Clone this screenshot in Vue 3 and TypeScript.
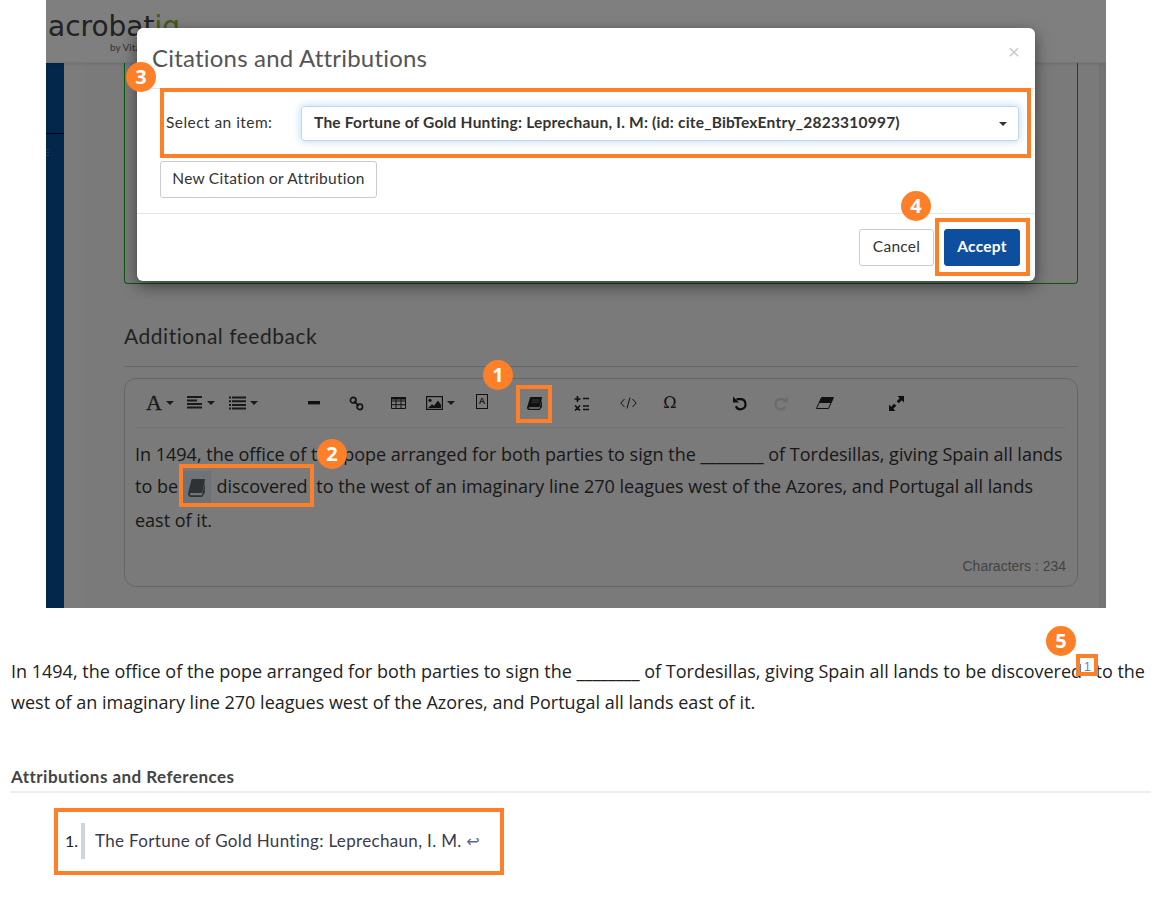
<script setup lang="ts">
const marks = [
  { n: 1, x: 498, y: 375 },
  { n: 2, x: 332, y: 454 },
  { n: 3, x: 141, y: 77 },
  { n: 4, x: 916, y: 206 },
  { n: 5, x: 1061, y: 641 },
]
const boxes = [
  { x: 160, y: 88, w: 871, h: 70 },
  { x: 935, y: 218, w: 95, h: 58 },
  { x: 516, y: 385, w: 36, h: 38 },
  { x: 179, y: 464, w: 135, h: 43 },
  { x: 1076, y: 654, w: 22, h: 22 },
  { x: 54, y: 808, w: 450, h: 67 },
]
const bookPath =
  'M3 .5Q3.200 0 3.800 0H14.600Q15 0 15 .5L12.700 9.600Q12.500 10.200 11.900 10.200H2.600Q1.400 10.200 1.600 11.100Q1.800 11.800 2.800 11.800H12.400L14.900 2.500V10L13 12.500Q12.800 13 12.200 13H2.600Q0 13 0 10.500Z'
</script>

<template>
  <div class="page">
    <section class="shot">
      <header class="app-header">
        <div class="logo">
          <span class="logo-word">acrobat<em>iq</em></span>
          <span class="logo-by">by Vital</span>
        </div>
      </header>
      <div class="app-body">
        <aside class="sidebar"><i class="side-rule"></i><i class="side-glyph"></i></aside>
        <div class="strip"></div>
        <main class="main">
          <div class="green-card"></div>
          <h2 class="feedback">Additional feedback</h2>
          <div class="editor">
            <div class="toolbar">
              <span class="tb font-a w40">A<i class="caret"></i></span>
              <span class="tb w42">
                <svg width="16" height="14" viewBox="0 0 16 14"><path d="M0 1h15M0 4.500h10M0 8h15M0 11.500h15" stroke="#333" stroke-width="1.800" /></svg><i class="caret"></i>
              </span>
              <span class="tb w42">
                <svg width="17" height="14" viewBox="0 0 17 14"><path d="M0 1.500h2M0 5.200h2M0 8.900h2M0 12.500h2M3 1.500h14M3 5.200h14M3 8.900h14M3 12.500h14" stroke="#333" stroke-width="2" /></svg><i class="caret"></i>
              </span>
              <span class="tb w42 g29">
                <svg width="12" height="4" viewBox="0 0 12 4"><rect width="12" height="3.400" fill="#222" /></svg>
              </span>
              <span class="tb w42">
                <svg width="15" height="15" viewBox="0 0 16 16"><circle cx="4.500" cy="4.500" r="3" fill="none" stroke="#222" stroke-width="1.700" /><circle cx="11.500" cy="11.500" r="3" fill="none" stroke="#222" stroke-width="1.700" /><path d="M5.500 5.500l5 5" stroke="#222" stroke-width="1.700" /></svg>
              </span>
              <span class="tb w42">
                <svg width="15" height="12" viewBox="0 0 15 12"><path d="M.5.500h14v11H.5zM.5 4h14M.5 7.700h14M5 .5v11M10 .5v11" fill="none" stroke="#222" /><path d="M0 0h15v2.500H0z" fill="#222" /></svg>
              </span>
              <span class="tb w42">
                <svg width="17" height="14" viewBox="0 0 17 14"><rect x=".6" y=".6" width="15.800" height="12.800" fill="none" stroke="#222" stroke-width="1.200" /><circle cx="4" cy="4.300" r="1.600" fill="#222" /><path d="M2 12l4-3.800 2 1.600 4-5.300 3 4.300v3.200z" fill="#222" /></svg><i class="caret"></i>
              </span>
              <span class="tb w42">
                <span class="boxed-a">A</span>
              </span>
              <span class="tb w42 g10">
                <svg width="15" height="13" viewBox="0 0 15 13"><path :d="bookPath" fill="#222" /><path d="M5 3h7.500M4.500 5.200h7.500" stroke="#888" stroke-width=".8" /></svg>
              </span>
              <span class="tb w42 g5">
                <svg width="15" height="15" viewBox="0 0 15 15"><path d="M3.500 0v6M.5 3h6M9 2.500h6M1 9.500l5 5M6 9.500l-5 5M9 10h6M9 13.500h6" stroke="#222" stroke-width="1.700" fill="none" /></svg>
              </span>
              <span class="tb w42 g5">
                <svg width="17" height="12" viewBox="0 0 17 12"><path d="M4.500 2L.8 6l3.700 4M12.500 2l3.700 4-3.700 4M10 .5L7 11.500" stroke="#222" fill="none" stroke-width="1" /></svg>
              </span>
              <span class="tb w42 omega">Ω</span>
              <span class="tb w42 g29">
                <svg class="shift-l" width="15" height="15" viewBox="0 0 15 15"><path d="M4.500 3.200H8.500a5 5 0 1 1-4.600 7" stroke="#1c1c1c" stroke-width="2.200" fill="none" /><path d="M1 0.500v6h6z" fill="#1c1c1c" /></svg>
              </span>
              <span class="tb w42">
                <svg class="shift-l" width="15" height="15" viewBox="0 0 15 15"><path d="M10.500 3.200H6.500a5 5 0 1 0 4.600 7" stroke="#d6d6d6" stroke-width="2.200" fill="none" /><path d="M14 0.500v6H8z" fill="#d6d6d6" /></svg>
              </span>
              <span class="tb w42">
                <svg width="18" height="12" viewBox="0 0 18 12"><path d="M5.500.5H17.500L12.500 11.500H.5z" fill="none" stroke="#222" /><path d="M5.500.5H17.500L15 6H3z" fill="#222" /></svg>
              </span>
              <span class="tb w42 g29">
                <svg width="15" height="15" viewBox="0 0 15 15"><path d="M8.500 0H15V6.500L12.800 4.300 9.800 7.300 7.700 5.200 10.700 2.200zM6.500 15H0V8.500L2.200 10.700 5.200 7.700 7.300 9.800 4.300 12.800z" fill="#1c1c1c" /></svg>
              </span>
            </div>
            <div class="editor-text">In 1494, the office of the pope arranged for both parties to sign the ________ of Tordesillas, giving Spain all lands to be <span class="cite-icon"><svg width="17" height="18" viewBox="0 0 15 13" preserveAspectRatio="none"><path :d="bookPath" fill="#5d6468" /></svg></span> <span class="cite-word">discovered</span> to the west of an imaginary line 270 leagues west of the Azores, and Portugal all lands east of it.</div>
            <div class="editor-foot">Characters : 234</div>
          </div>
        </main>
        <div class="gutter"></div>
      </div>
      <div class="backdrop"></div>
      <div class="modal">
        <div class="modal-head">
          <h3>Citations and Attributions</h3>
          <span class="close">×</span>
        </div>
        <div class="modal-body">
          <div class="select-row">
            <label>Select an item:</label>
            <div class="select">
              <span>The Fortune of Gold Hunting: Leprechaun, I. M: (id: cite_BibTexEntry_2823310997)</span>
              <i class="select-caret"></i>
            </div>
          </div>
          <button class="btn new-btn">New Citation or Attribution</button>
        </div>
        <div class="modal-foot">
          <button class="btn cancel">Cancel</button>
          <button class="btn accept">Accept</button>
        </div>
      </div>
    </section>

    <section class="article">
      <p class="para">In 1494, the office of the pope arranged for both parties to sign the ________ of Tordesillas, giving Spain all lands to be discovered<sup class="fn">1</sup> to the west of an imaginary line 270 leagues west of the Azores, and Portugal all lands east of it.</p>
      <h4 class="refs-title">Attributions and References</h4>
      <ol class="refs">
        <li><span class="ref-num">1.</span><span class="ref-bar"></span><span class="ref-text">The Fortune of Gold Hunting: Leprechaun, I. M. <span class="back">↩</span></span></li>
      </ol>
    </section>

    <i
      v-for="(b, i) in boxes"
      :key="'b' + i"
      class="call-box"
      :style="{ left: b.x + 'px', top: b.y + 'px', width: b.w + 'px', height: b.h + 'px' }"
    ></i>
    <span
      v-for="m in marks"
      :key="m.n"
      class="badge"
      :style="{ left: m.x - 15 + 'px', top: m.y - 15 + 'px' }"
    >{{ m.n }}</span>
  </div>
</template>

<style scoped>
.page {
  position: relative;
  width: 1152px;
  height: 902px;
  overflow: hidden;
  background: #fff;
  font-family: "Open Sans", sans-serif;
  color: #333;
}
.shot {
  position: relative;
  margin-left: 46px;
  width: 1060px;
  height: 608px;
  overflow: hidden;
  background: #fff;
}
.app-header {
  height: 63px;
  box-sizing: border-box;
  border-bottom: 1px solid #eee;
  box-shadow: 0 1px 3px rgba(0, 0, 0, .1);
  position: relative;
  z-index: 1;
  background: #fff;
}
.logo {
  position: relative;
  padding: 9px 0 0 2px;
  font-family: "DejaVu Sans", sans-serif;
}
.logo-word {
  font-size: 28px;
  line-height: 36px;
  color: #444;
}
.logo-word em {
  font-style: normal;
  color: #8ab82e;
}
.logo-by {
  position: absolute;
  left: 64px;
  top: 41px;
  font: 400 10px/12px Lato, sans-serif;
  color: #666;
}
.app-body {
  display: flex;
  height: 545px;
  background: #f4f4f4;
}
.sidebar {
  width: 18px;
  background: #064d96;
  position: relative;
}
.side-rule {
  display: block;
  height: 1px;
  margin-top: 70px;
  background: #003;
}
.side-glyph {
  display: block;
  width: 3px;
  height: 8px;
  margin-top: 15px;
  background: repeating-linear-gradient(#3a74b0 0 1px, transparent 1px 3px);
}
.strip {
  width: 20px;
  background: #f8f8f8;
}
.main {
  width: 954px;
  margin-left: 40px;
  flex: none;
}
.gutter {
  width: 7px;
  margin-left: 21px;
  background: #e8e8e8;
  flex: none;
}
.green-card {
  height: 221px;
  box-sizing: border-box;
  border: 1px solid #10b010;
  border-top: 0;
  border-radius: 0 0 4px 4px;
}
.feedback {
  margin: 39px 0 0;
  padding-bottom: 17px;
  height: 26px;
  border-bottom: 1px solid #ccc;
  font: 400 21px/26px Lato, sans-serif;
  color: #444;
  letter-spacing: .52px;
}
.editor {
  margin-top: 11px;
  height: 209px;
  box-sizing: border-box;
  border: 1px solid #ccc;
  border-radius: 12px;
  display: flex;
  flex-direction: column;
  padding: 0 11px 0 10px;
}
.toolbar {
  display: flex;
  align-items: center;
  height: 48px;
  border-bottom: 1px solid #e4e4e4;
  flex: none;
  padding-left: 5px;
}
.tb {
  display: inline-flex;
  align-items: center;
  justify-content: center;
  gap: 4px;
  flex: none;
  height: 40px;
}
.w40 { width: 40px; }
.w42 { width: 42px; }
.g10 { margin-left: 10px; }
.g5 { margin-left: 5px; }
.g29 { margin-left: 29px; }
.shift-l { margin-left: -3px; }
.font-a {
  font: 400 22px/1 "Liberation Serif", serif;
  -webkit-text-stroke: .3px #333;
  color: #333;
}
.caret {
  display: inline-block;
  border-top: 4px solid #333;
  border-left: 4px solid transparent;
  border-right: 4px solid transparent;
}
.boxed-a {
  width: 12px;
  height: 15px;
  margin-top: -4px;
  box-sizing: border-box;
  border: 1px solid #222;
  font: 700 9px/13px "Liberation Sans", sans-serif;
  text-align: center;
  color: #333;
}
.omega {
  font: 400 16px/1 "DejaVu Serif", serif;
  color: #222;
}
.editor-text {
  flex: 1;
  padding-top: 10px;
  font-size: 18px;
  line-height: 32px;
  color: #333;
}
.cite-icon {
  display: inline-flex;
  align-items: center;
  justify-content: center;
  width: 28px;
  height: 34px;
  margin: -1px 1px -1px 0;
  vertical-align: middle;
  background: #dbe6ee;
}
.cite-word {
  margin-right: 4px;
}
.editor-foot {
  height: 39px;
  margin: 0 -1px;
  padding-right: 1px;
  border-top: 1px solid #eee;
  text-align: right;
  font: 400 14px/38px "Liberation Sans", sans-serif;
  color: #888;
}
.backdrop {
  position: absolute;
  inset: 0;
  z-index: 2;
  background: rgba(0, 0, 0, .5);
}
.modal {
  position: absolute;
  z-index: 3;
  left: 91px;
  top: 28px;
  width: 898px;
  height: 253px;
  background: #fff;
  border-radius: 6px;
  box-shadow: 0 5px 15px rgba(0, 0, 0, .5);
  display: flex;
  flex-direction: column;
  font-family: Lato, sans-serif;
}
.modal-head {
  height: 61px;
  box-sizing: border-box;
  border-bottom: 1px solid #e5e5e5;
  display: flex;
  justify-content: space-between;
  padding: 15px 15px 0 15px;
}
.modal-head h3 {
  margin: 0;
  font: 400 24px/30px Lato, sans-serif;
  letter-spacing: .2px;
  color: #555;
}
.close {
  font: 400 21px/18px "Liberation Sans", sans-serif;
  color: #ccc;
}
.modal-body {
  flex: 1;
  padding: 17px 16px 0 23px;
}
.select-row {
  display: flex;
  align-items: center;
  height: 35px;
}
.select-row label {
  width: 135px;
  margin-left: 6px;
  padding-bottom: 4px;
  flex: none;
  font-size: 15.500px;
  letter-spacing: .45px;
  color: #333;
}
.select {
  flex: 1;
  height: 35px;
  box-sizing: border-box;
  border: 1px solid #c5d6e6;
  border-radius: 3px;
  box-shadow: 0 0 8px rgba(102, 175, 233, .5);
  display: flex;
  align-items: center;
  justify-content: space-between;
  padding: 0 11px 3px 12px;
  font-size: 15.500px;
  font-weight: 700;
  letter-spacing: .22px;
  color: #333;
}
.select-caret {
  border-top: 4px solid #333;
  border-left: 4px solid transparent;
  border-right: 4px solid transparent;
  margin-top: 3px;
}
.btn {
  box-sizing: border-box;
  background: #fff;
  border: 1px solid #ccc;
  border-radius: 3px;
  font-family: Lato, sans-serif;
  font-size: 15.500px;
  letter-spacing: .25px;
  color: #333;
  padding: 0 0 4px;
}
.new-btn {
  display: block;
  margin: 20px 0 0 0;
  width: 217px;
  height: 37px;
}
.modal-foot {
  height: 68px;
  box-sizing: border-box;
  border-top: 1px solid #e5e5e5;
  display: flex;
  justify-content: flex-end;
  align-items: flex-start;
  gap: 10px;
  padding: 15px 15px 0 0;
}
.cancel { width: 75px; height: 37px; }
.accept {
  width: 76px;
  height: 37px;
  background: #0d4f9e;
  border-color: #0d4f9e;
  color: #fff;
  font-weight: 700;
}
.article {
  padding: 48px 1px 0 11px;
}
.para {
  margin: 0;
  width: 1140px;
  font-size: 18px;
  line-height: 31px;
  color: #222;
}
.fn {
  font-size: 12px;
  line-height: 0;
  color: #5b87b5;
  margin: 0 0 0 2px;
  font-family: "Liberation Sans", sans-serif;
}
.refs-title {
  margin: 48px 0 0;
  height: 25px;
  border-bottom: 2px solid #eee;
  width: 1140px;
  font: 700 17px/22px Lato, sans-serif;
  letter-spacing: .46px;
  color: #444;
}
.refs {
  list-style: none;
  margin: 30px 0 0;
  padding: 0 0 0 55px;
  font-family: Lato, sans-serif;
}
.refs li {
  display: flex;
  align-items: center;
  height: 36px;
}
.ref-num {
  font-size: 16px;
  color: #222;
  width: 15px;
  margin-left: -1px;
  padding-right: 1px;
  padding-bottom: 1px;
}
.ref-bar {
  width: 4px;
  height: 36px;
  background: #ccd5dd;
  margin-right: 10px;
}
.ref-text {
  font-size: 17px;
  letter-spacing: .33px;
  color: #3a3a4a;
  padding-bottom: 1px;
  white-space: nowrap;
}
.back {
  font-family: "DejaVu Sans", sans-serif;
  font-size: 16px;
  color: #5b6a8a;
}
.call-box {
  position: absolute;
  box-sizing: border-box;
  border: 4px solid #fd7f28;
  z-index: 5;
}
.badge {
  position: absolute;
  z-index: 6;
  width: 30px;
  height: 30px;
  border-radius: 50%;
  background: #fd7f28;
  color: #fff;
  font: 700 20px/30px "Open Sans", sans-serif;
  text-align: center;
}
</style>

<style>
html, body { margin: 0; background: #fff; }
</style>
